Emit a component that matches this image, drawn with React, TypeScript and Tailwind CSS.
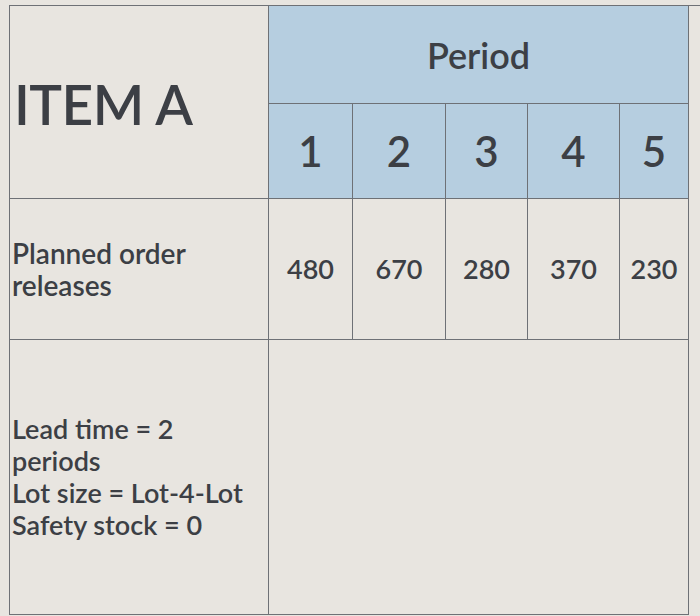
const periods = ["1", "2", "3", "4", "5"];
const releases = ["480", "670", "280", "370", "230"];

export default function App() {
  return (
    <div
      className="h-[616px] w-[700px] overflow-hidden bg-[#e8e5e0] pl-[9px] pt-[5px] text-[#3c3f45]"
      style={{ fontFamily: "Lato, 'Open Sans', sans-serif" }}
    >
      <div className="grid grid-cols-[259px_84px_93px_82px_92px_69px] grid-rows-[98px_95px_141px_275px] border-l border-t border-[#6e7176]">
        <div className="col-start-1 row-span-2 row-start-1 flex items-center border-b border-r border-[#6e7176] pl-[4px] pt-[4px] text-[55px] font-semibold leading-none tracking-[-0.5px]">
          ITEM A
        </div>
        <div className="col-span-5 col-start-2 row-start-1 flex items-center justify-center border-b border-r border-[#6e7176] bg-[#b6cee0] text-[36px] font-semibold">
          Period
        </div>
        {periods.map((p) => (
          <div
            key={p}
            className="flex items-center justify-center border-b border-r border-[#6e7176] bg-[#b6cee0] text-[42px] font-semibold"
          >
            {p}
          </div>
        ))}

        <div className="flex items-center border-b border-r border-[#6e7176] pl-[2px] text-[28px] font-semibold leading-[32px]">
          Planned order
          <br />
          releases
        </div>
        {releases.map((v) => (
          <div
            key={v}
            className="flex items-center justify-center border-b border-r border-[#6e7176] text-[27px] font-semibold"
          >
            {v}
          </div>
        ))}

        <div className="flex items-center border-b border-r border-[#6e7176] pl-[2px] text-[27px] font-semibold leading-[32px]">
          <p>
            Lead time = 2
            <br />
            periods
            <br />
            Lot size = Lot-4-Lot
            <br />
            Safety stock = 0
          </p>
        </div>
        <div className="col-span-5 border-b border-r border-[#6e7176]" />
      </div>
    </div>
  );
}
